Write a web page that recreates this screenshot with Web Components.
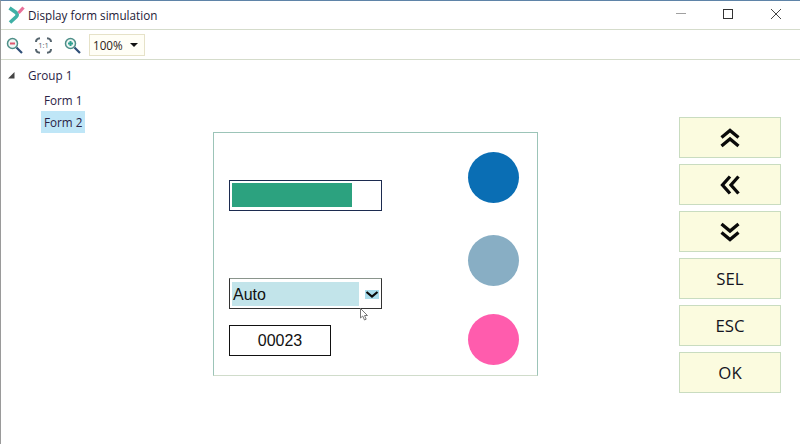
<!DOCTYPE html>
<html>
<head>
<meta charset="utf-8">
<title>Display form simulation</title>
<style>
    html, body { margin: 0; height: 100%; background: #fff; }
</style>
</head>
<body>
<sim-window>
    <title-bar slot="title">Display form simulation</title-bar>
    <zoom-toolbar slot="toolbar"></zoom-toolbar>
    <form-tree slot="tree"></form-tree>
    <display-form slot="form"></display-form>
    <key-pad slot="keys"></key-pad>
</sim-window>

<script>
class SimWindow extends HTMLElement {
    constructor() {
        super();
        this.shadowDOM = this.attachShadow({ mode: 'open' });
    }

    connectedCallback() {
        this.shadowDOM.innerHTML = `
        <style>
            :host {
                display: flex;
                flex-direction: column;
                box-sizing: border-box;
                width: 800px;
                height: 444px;
                overflow: hidden;
                background: #fff;
                border-top: 1px solid #5f84a8;
                border-left: 1px solid #9a9a9a;
                font-family: "Open Sans", "Noto Sans", sans-serif;
                color: #1c1c2e;
            }
            .body {
                flex: 1;
                display: grid;
                grid-template-columns: 212px 325px 1fr;
            }
            .keys { padding: 57px 0 0 141px; }
            .form { padding-top: 72px; }
        </style>
        <slot name="title"></slot>
        <slot name="toolbar"></slot>
        <div class="body">
            <div><slot name="tree"></slot></div>
            <div class="form"><slot name="form"></slot></div>
            <div class="keys"><slot name="keys"></slot></div>
        </div>
        `;
    }
}

class TitleBar extends HTMLElement {
    constructor() {
        super();
        this.shadowDOM = this.attachShadow({ mode: 'open' });
    }

    connectedCallback() {
        this.shadowDOM.innerHTML = `
        <style>
            :host {
                display: flex;
                align-items: center;
                height: 29px;
                box-sizing: border-box;
                border-bottom: 1px solid #d5dccb;
                font-size: 11.7px;
                color: #241a38;
            }
            .logo { width: 17px; height: 18px; margin: 0 3px 0 7px; flex: none; }
            .text { flex: 1; padding-bottom: 1px; }
            .controls { display: flex; gap: 37px; padding-right: 19px; padding-bottom: 3px; }
            .controls svg { width: 10px; height: 10px; display: block; }
            .controls .close { margin-left: 1px; }
        </style>
        <svg class="logo" viewBox="0 0 17 18">
            <path d="M1.500 2 L8 6.500 Q10.500 8.500 8 11 L2 16.500" fill="none" stroke="#3fb0a6" stroke-width="3.600"/>
            <path d="M10.500 7 L15.500 1.500" fill="none" stroke="#e8709a" stroke-width="3.200"/>
        </svg>
        <span class="text"><slot></slot></span>
        <div class="controls">
            <svg viewBox="0 0 10 10"><path d="M0 4.500H10" stroke="#a0a0a0" stroke-width="1"/></svg>
            <svg viewBox="0 0 10 10"><rect x=".5" y=".5" width="9" height="9" fill="none" stroke="#333" stroke-width="1"/></svg>
            <svg class="close" viewBox="0 0 10 10"><path d="M0 0L10 10M10 0L0 10" stroke="#444" stroke-width="1"/></svg>
        </div>
        `;
    }
}

class ZoomToolbar extends HTMLElement {
    constructor() {
        super();
        this.shadowDOM = this.attachShadow({ mode: 'open' });
    }

    connectedCallback() {
        this.shadowDOM.innerHTML = `
        <style>
            :host {
                display: flex;
                align-items: center;
                height: 30px;
                box-sizing: border-box;
                border-bottom: 1px solid #d5dccb;
                padding-left: 5px;
                padding-top: 1px;
            }
            svg { width: 17px; height: 17px; display: block; flex: none; }
            .next { margin-left: 12px; }
            text { font: 7.500px "Open Sans", sans-serif; fill: #56656e; }
            .combo {
                box-sizing: border-box;
                margin-left: 8px;
                width: 56px;
                height: 22px;
                border: 1px solid #e6e2c8;
                background: #fffef6;
                display: flex;
                align-items: center;
                justify-content: space-between;
                padding: 0 6px 0 3px;
                font-size: 11.7px;
                color: #2c2418;
            }
            .arrow { width: 0; height: 0; border: 4px solid transparent; border-top: 4px solid #111; border-bottom: 0; }
        </style>
        <svg viewBox="0 0 17 17">
            <circle cx="6.500" cy="6.500" r="5" fill="#eef6f4" stroke="#4e8f88" stroke-width="1.500"/>
            <path d="M4 6.500H9" stroke="#e0566f" stroke-width="2"/>
            <path d="M10.500 10.500L16 16" stroke="#2f4f78" stroke-width="2.200"/>
        </svg>
        <svg class="next" viewBox="0 0 17 17">
            <path d="M1 5Q1 1.500 5 1.200M12 1.200Q16 1.500 16 5M16 12Q16 15.500 12 15.800M5 15.800Q1 15.500 1 12" fill="none" stroke="#56656e" stroke-width="2"/>
            <text x="8.500" y="11" text-anchor="middle">1:1</text>
        </svg>
        <svg class="next" viewBox="0 0 17 17">
            <circle cx="6.500" cy="6.500" r="5" fill="#eef6f4" stroke="#4e8f88" stroke-width="1.500"/>
            <path d="M4 6.500H9M6.500 4V9" stroke="#2fa090" stroke-width="2"/>
            <path d="M10.500 10.500L16 16" stroke="#2f4f78" stroke-width="2.200"/>
        </svg>
        <div class="combo"><span>100%</span><span class="arrow"></span></div>
        `;
    }
}

class FormTree extends HTMLElement {
    constructor() {
        super();
        this.shadowDOM = this.attachShadow({ mode: 'open' });
    }

    connectedCallback() {
        this.shadowDOM.innerHTML = `
        <style>
            :host {
                display: block;
                font-size: 11.7px;
                color: #2a2244;
                padding-top: 4px;
            }
            .row { height: 22px; display: flex; align-items: center; }
            .group { padding-left: 7px; margin-bottom: 3px; }
            .tri { width: 7px; height: 7px; margin-right: 13px; }
            .leaf { padding-left: 40px; }
            .leaf span { padding: 0 3px; height: 22px; line-height: 22px; }
            .sel { background: #bfe6f7; }
        </style>
        <div class="row group">
            <svg class="tri" viewBox="0 0 7 7"><path d="M0 6.500H6.500V0Z" fill="#444"/></svg>
            <span>Group 1</span>
        </div>
        <div class="row leaf"><span>Form 1</span></div>
        <div class="row leaf"><span class="sel">Form 2</span></div>
        `;
    }
}

class DisplayForm extends HTMLElement {
    constructor() {
        super();
        this.shadowDOM = this.attachShadow({ mode: 'open' });
    }

    connectedCallback() {
        this.shadowDOM.innerHTML = `
        <style>
            :host {
                display: grid;
                grid-template-columns: 1fr 51px;
                box-sizing: border-box;
                width: 325px;
                height: 244px;
                border: 1px solid #9cc4b8;
                border-bottom-color: #d0dccb;
                font-family: "Liberation Sans", Arial, sans-serif;
                color: #111;
            }
            .left { padding: 47px 0 0 15px; }
            .right { padding-top: 19px; margin-left: -18px; }
            .box {
                box-sizing: border-box;
                border: 1px solid #111;
                background: #fff;
            }
            .bar { width: 153px; height: 31px; padding: 2px 29px 3px 2px; border-color: #1c2b50; }
            .bar div { height: 100%; background: #2ca27f; }
            .combo {
                width: 153px;
                height: 31px;
                margin-top: 67px;
                padding: 3px 2px 2px 2px;
                display: flex;
                align-items: center;
                font-size: 16px;
                border-color: #333;
                border-top-color: #8a958c;
            }
            .combo .val { width: 127px; height: 100%; background: #c2e4ea; line-height: 25px; padding-left: 1px; box-sizing: border-box; }
            .combo .drop { margin-left: 6px; width: 14px; height: 9px; background: #a9dcec; display: flex; }
            .combo svg { width: 14px; height: 9px; display: block; }
            .num {
                width: 102px;
                height: 31px;
                margin-top: 16px;
                font-size: 16px;
                text-align: center;
                line-height: 29px;
            }
            .led { width: 51px; height: 51px; border-radius: 50%; }
            .led + .led { margin-top: 32px; }
            .led.c { margin-top: 28px; }
            .cursor { position: absolute; left: 360px; top: 308px; width: 9px; height: 13px; }
        </style>
        <div class="left">
            <div class="box bar"><div></div></div>
            <div class="box combo">
                <div class="val">Auto</div>
                <div class="drop"><svg viewBox="0 0 14 9"><path d="M1.500 2L7 6.500L12.500 2" fill="none" stroke="#0a0a0a" stroke-width="2.200"/></svg></div>
            </div>
            <div class="box num">00023</div>
        </div>
        <div class="right">
            <div class="led" style="background:#0a6eb4"></div>
            <div class="led" style="background:#88aec4"></div>
            <div class="led c" style="background:#ff5cad"></div>
        </div>
        <svg class="cursor" viewBox="0 0 9 13"><path d="M.5 .5V10L2.700 8L4.500 12L6.200 11.200L4.500 7.500H7.500Z" fill="#fff" stroke="#777" stroke-width="1"/></svg>
        `;
    }
}

class KeyPad extends HTMLElement {
    constructor() {
        super();
        this.shadowDOM = this.attachShadow({ mode: 'open' });
    }

    connectedCallback() {
        const chevrons = {
            up: 'M1.500 9.500L10 2.500L18.500 9.500M1.500 18L10 11L18.500 18',
            left: 'M10 1.500L2.500 10L10 18.500M18.500 1.500L11 10L18.500 18.500',
            down: 'M1.500 2L10 9L18.500 2M1.500 10.500L10 17.500L18.500 10.500'
        };
        const icon = d => `<svg viewBox="0 0 20 20"><path d="${d}" fill="none" stroke="#0a0a0a" stroke-width="3.300"/></svg>`;
        this.shadowDOM.innerHTML = `
        <style>
            :host { display: flex; flex-direction: column; gap: 6px; width: 102px; }
            .key {
                box-sizing: border-box;
                height: 41px;
                display: flex;
                align-items: center;
                justify-content: center;
                background: #fbfbdf;
                border: 1px solid #c9dcc0;
                font-family: "Open Sans", "Noto Sans", sans-serif;
                font-size: 16.800px;
                color: #14141e;
            }
            svg { width: 20px; height: 20px; display: block; }
        </style>
        <div class="key">${icon(chevrons.up)}</div>
        <div class="key">${icon(chevrons.left)}</div>
        <div class="key">${icon(chevrons.down)}</div>
        <div class="key">SEL</div>
        <div class="key">ESC</div>
        <div class="key">OK</div>
        `;
    }
}

window.customElements.define('sim-window', SimWindow);
window.customElements.define('title-bar', TitleBar);
window.customElements.define('zoom-toolbar', ZoomToolbar);
window.customElements.define('form-tree', FormTree);
window.customElements.define('display-form', DisplayForm);
window.customElements.define('key-pad', KeyPad);
</script>
</body>
</html>
